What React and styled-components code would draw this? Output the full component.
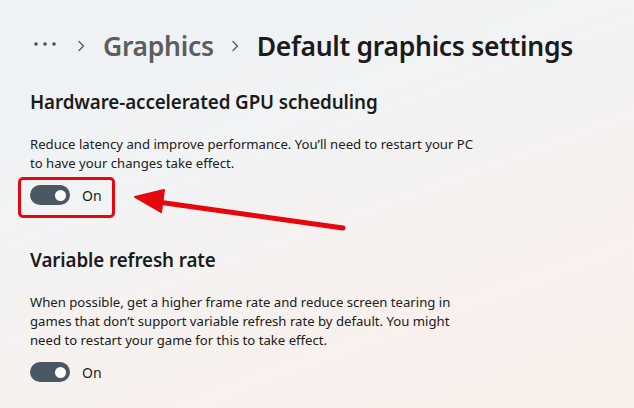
import styled, { createGlobalStyle } from 'styled-components';

const GlobalStyle = createGlobalStyle`
  html, body {
    margin: 0;
    padding: 0;
  }
  body {
    font-family: 'Noto Sans', 'Open Sans', sans-serif;
    color: #1b1b1b;
  }
`;

const Page = styled.div`
  position: relative;
  width: 634px;
  height: 408px;
  overflow: hidden;
  box-sizing: border-box;
  padding: 26px 30px 0 30px;
  background: linear-gradient(160deg, #edf2f6 0%, #f1f3f4 35%, #f7f1ee 65%, #faf0eb 100%);
`;

const Breadcrumb = styled.div`
  display: flex;
  align-items: center;
  height: 40px;
  font-size: 26.5px;
  font-weight: 600;
  letter-spacing: -0.3px;
  white-space: nowrap;
`;

const Dots = styled.svg`
  margin: -4px 20px 0 3px;
`;

const Chevron = styled.svg`
  margin-right: 18px;
`;

const Crumb = styled.span`
  color: ${(p) => (p.current ? '#1b1b1b' : '#5d5d5d')};
  margin-right: 17px;
`;

const Section = styled.section`
  margin-top: ${(p) => p.top}px;
`;

const Heading = styled.h2`
  margin: 0;
  font-size: 18.8px;
  font-weight: 600;
  line-height: 24px;
  letter-spacing: -0.1px;
`;

const Description = styled.p`
  margin: 21px 0 0 0;
  font-size: 13.15px;
  line-height: 19px;
  color: #202020;
  white-space: nowrap;
`;

const ToggleRow = styled.div`
  position: relative;
  display: flex;
  align-items: center;
  gap: 12px;
  margin-top: 12px;
  height: 20px;
`;

const Switch = styled.div`
  position: relative;
  box-sizing: border-box;
  width: 40px;
  height: 20px;
  border-radius: 10px;
  background: #4b5762;
`;

const Knob = styled.div`
  position: absolute;
  top: 5px;
  right: 4px;
  width: 11px;
  height: 11px;
  border-radius: 50%;
  background: #ffffff;
`;

const ToggleLabel = styled.span`
  font-size: 14px;
  color: #1b1b1b;
`;

const Highlight = styled.div`
  position: absolute;
  left: -12px;
  top: -8px;
  width: 97px;
  height: 41px;
  box-sizing: border-box;
  border: 3.5px solid #e5060e;
  border-radius: 5px;
  pointer-events: none;
`;

const Arrow = styled.svg`
  position: absolute;
  left: 0;
  top: 0;
  pointer-events: none;
`;

const ChevronIcon = () => (
  <Chevron width="8" height="12" viewBox="0 0 8 12">
    <path d="M2 1.5 L6.5 6 L2 10.5" fill="none" stroke="#5d5d5d" strokeWidth="1.4" strokeLinecap="round" strokeLinejoin="round" />
  </Chevron>
);

const Toggle = ({ highlighted }) => (
  <ToggleRow>
    <Switch>
      <Knob />
    </Switch>
    <ToggleLabel>On</ToggleLabel>
    {highlighted && <Highlight />}
  </ToggleRow>
);

export default function App() {
  return (
    <>
      <GlobalStyle />
      <Page>
        <Breadcrumb>
          <Dots width="24" height="6" viewBox="0 0 24 6">
            <circle cx="3" cy="3" r="1.8" fill="#4f4f4f" />
            <circle cx="12" cy="3" r="1.8" fill="#4f4f4f" />
            <circle cx="21" cy="3" r="1.8" fill="#4f4f4f" />
          </Dots>
          <ChevronIcon />
          <Crumb>Graphics</Crumb>
          <ChevronIcon />
          <Crumb current>Default graphics settings</Crumb>
        </Breadcrumb>

        <Section top={24}>
          <Heading>Hardware-accelerated GPU scheduling</Heading>
          <Description>
            Reduce latency and improve performance. You’ll need to restart your PC
            <br />
            to have your changes take effect.
          </Description>
          <Toggle highlighted />
        </Section>

        <Section top={43}>
          <Heading>Variable refresh rate</Heading>
          <Description>
            When possible, get a higher frame rate and reduce screen tearing in
            <br />
            games that don’t support variable refresh rate by default. You might
            <br />
            need to restart your game for this to take effect.
          </Description>
          <Toggle />
        </Section>

        <Arrow width="634" height="408" viewBox="0 0 634 408">
          <line x1="343" y1="228" x2="158" y2="202" stroke="#e5060e" strokeWidth="5" strokeLinecap="round" />
          <polygon points="135,197 164,190 161,212" fill="#e5060e" stroke="#e5060e" strokeWidth="2" strokeLinejoin="round" />
        </Arrow>
      </Page>
    </>
  );
}
